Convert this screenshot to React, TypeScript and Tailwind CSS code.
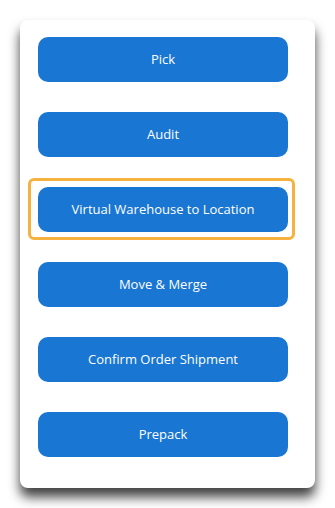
import React from "react";

const items = [
  "Pick",
  "Audit",
  "Virtual Warehouse to Location",
  "Move & Merge",
  "Confirm Order Shipment",
  "Prepack",
];

export default function App() {
  return (
    <div
      className="w-[335px] h-[508px] bg-white pt-[20px] pl-[20px]"
      style={{ fontFamily: '"Segoe UI", "Open Sans", "Noto Sans", sans-serif' }}
    >
      <div className="w-[295px] h-[468px] bg-white rounded-[8px] shadow-[0_9px_12px_rgba(0,0,0,0.75)] pt-[17px] pl-[18px] flex flex-col gap-[30px]">
        {items.map((label, i) =>
          i === 2 ? (
            <div
              key={label}
              className="w-[267px] ml-[-10px] mt-[-9px] mb-[-8px] border-[3px] border-[#f7b13f] rounded-[6px] pl-[7px] pt-[6px] pb-[5px]"
            >
              <button className="w-[250px] h-[45px] rounded-[10px] bg-[#1976d2] text-white text-[13px] flex items-center justify-center">
                {label}
              </button>
            </div>
          ) : (
            <button
              key={label}
              className="w-[250px] h-[45px] rounded-[10px] bg-[#1976d2] text-white text-[13px] flex items-center justify-center"
            >
              {label}
            </button>
          )
        )}
      </div>
    </div>
  );
}
